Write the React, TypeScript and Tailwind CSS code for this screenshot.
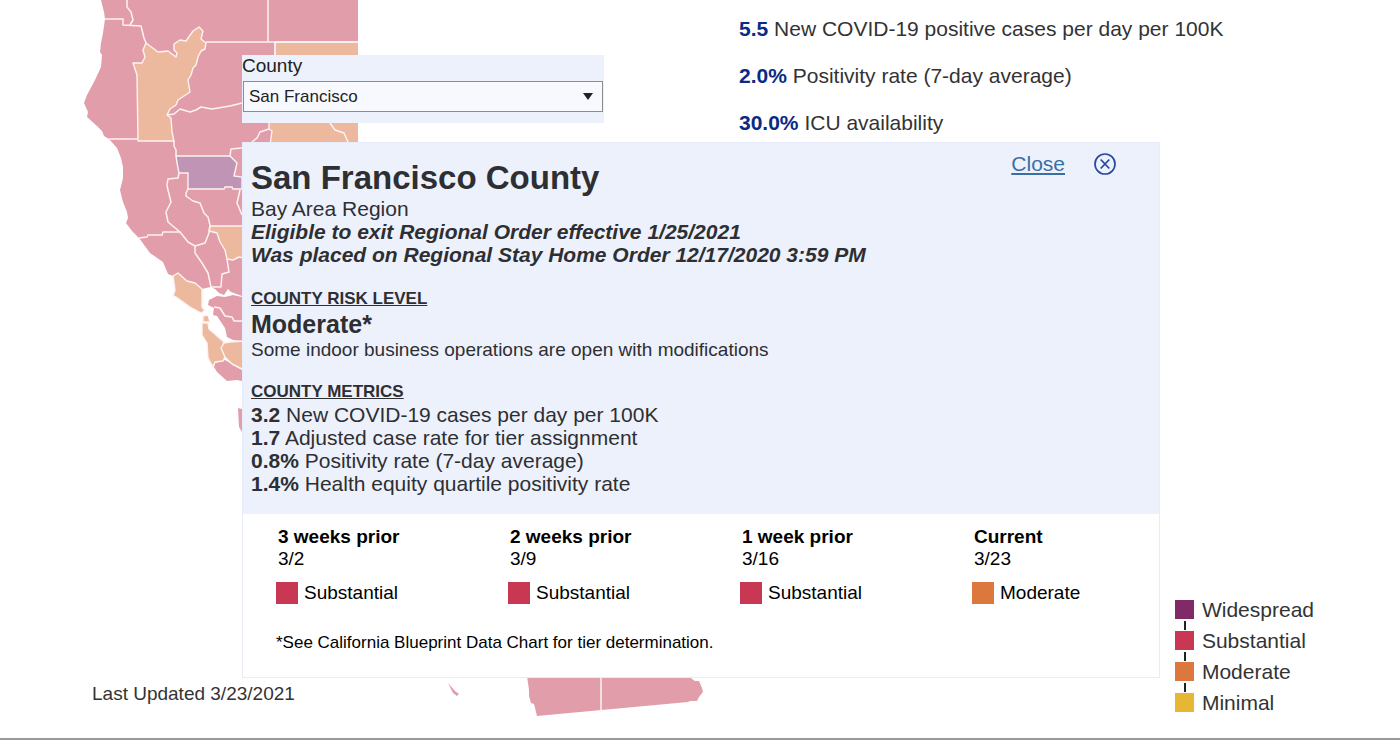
const tiers = [
  { name: "Widespread", color: "bg-[#802b68]" },
  { name: "Substantial", color: "bg-[#c83852]" },
  { name: "Moderate", color: "bg-[#dc783d]" },
  { name: "Minimal", color: "bg-[#e6b735]" },
];

const stateMetrics = [
  { value: "5.5", label: "New COVID-19 positive cases per day per 100K" },
  { value: "2.0%", label: "Positivity rate (7-day average)" },
  { value: "30.0%", label: "ICU availability" },
];

const countyMetrics = [
  { value: "3.2", label: "New COVID-19 cases per day per 100K" },
  { value: "1.7", label: "Adjusted case rate for tier assignment" },
  { value: "0.8%", label: "Positivity rate (7-day average)" },
  { value: "1.4%", label: "Health equity quartile positivity rate" },
];

const history = [
  { title: "3 weeks prior", date: "3/2", tier: "Substantial", color: "bg-[#c83852]" },
  { title: "2 weeks prior", date: "3/9", tier: "Substantial", color: "bg-[#c83852]" },
  { title: "1 week prior", date: "3/16", tier: "Substantial", color: "bg-[#c83852]" },
  { title: "Current", date: "3/23", tier: "Moderate", color: "bg-[#dc783d]" },
];

/* Shapes filled by tier, then the county borders on top */
const substantial = [
  "M101 0L104 12L105 19L103 33L101 43L100 52L102 55L101 67L95 80L87 95L84 103L88 112L87 117L97 126L102 131L104 136L109 139L117 148L121 158L123 167V178L120 190L123 202L127 212L128 218L126 223L132 231L139 238L150 253L163 262L168 274L173 276L178 273L187 281L195 283L202 289L206 288L211 287L215 289L219 293L224 295L228 289L231 292L242 296H358V0Z",
  "M209 300L217 296L225 297L233 295L242 297V341L233 340L227 337L225 328L217 316L213 315L214 308L208 305Z",
  "M215 363L225 360L242 370V381L237 380L227 381L217 372L214 367Z",
  "M238 408L242 409V432L239 427Z",
  "M448 683L455 691L459 694L457 696L453 693Z",
  "M527 676L529 690V696L531 703L534 704L537 716L688 702L690 701L697 701L699 697L703 692L702 688L699 681H695L688 676Z",
];

const moderate = [
  "M146 43L158 52L168 51L176 57L177 53L174 50V44L180 40L186 41L193 31L199 27L203 31L201 39L206 43L205 49L201 51L198 57L196 65L193 68L191 75L188 80L190 92L178 100L176 105L170 109L167 115L171 118L172 132L174 141H138L137 75L133 63L142 63L145 57L143 50Z",
  "M275 42H360V80H275Z",
  "M269 120V129L272 131L270 145H360V120Z",
  "M210 226H244V258L239 257L233 260L227 259L225 250L220 242L217 233L209 231Z",
  "M173 276L178 273L187 281L195 283L202 289V307L205 311L201 313L190 307L176 297L173 296L175 290Z",
  "M203 316L208 315L210 322H203Z",
  "M202 323H208L209 329L224 342L222 348L225 357L223 361L215 362L213 367L208 358L207 343L202 335Z",
  "M224 343L230 342L244 341V370L232 364L225 357L221 348Z",
];

const widespread =
  "M176 156H230L237 163L234 176L242 177V189H233L232 187H225L224 189H188V173H179L177 163Z";

const borders = [
  "M105 19H123V25L141 26L144 38L146 43",
  "M127 0L127 7L131 12L133 20L130 25",
  "M268 0V42M206 42H358M275 42V60",
  "M167 115L174 114L180 109L190 112L196 110L201 107L212 109L230 106L242 103",
  "M109 139H137",
  "M174 141L174 146L176 150V156",
  "M230 156L231 149L242 148",
  "M179 173L178 178L168 179L167 185L168 190L171 202L166 212L168 222L180 232L188 242L195 246V253L202 263L208 273L211 287",
  "M188 189L186 193L186 196L193 201L200 203L204 213L208 217L210 225L209 233L205 243L195 246",
  "M139 238L147 237L148 235H162L163 232H180",
  "M227 259L229 272L222 274L221 287H211",
  "M240 190L237 203L242 215",
  "M269 129L260 132L257 138L252 142",
  "M330 123L335 130L344 133L348 142",
  "M214 307L220 308L225 316L232 317L234 321H242",
  "M601 676V712",
];

function CountyMap() {
  return (
    <svg
      viewBox="0 0 739 738"
      className="col-start-1 row-start-1 h-[738px] w-[739px]"
      role="img"
      aria-label="California counties by risk level"
    >
      <clipPath id="map-frame">
        <path d="M0 0H358V600H739V738H0Z" />
      </clipPath>
      <g clipPath="url(#map-frame)">
        <g fill="#e29dab">
          {substantial.map((d) => (
            <path key={d} d={d} />
          ))}
        </g>
        <g fill="#ecb99e" stroke="#fdf3f2" strokeWidth="1.4" strokeLinejoin="round">
          {moderate.map((d) => (
            <path key={d} d={d} />
          ))}
        </g>
        <path d={widespread} fill="#bf94b4" stroke="#fdf3f2" strokeWidth="1.4" />
        <g fill="none" stroke="#fdf3f2" strokeWidth="1.5" strokeLinejoin="round">
          {borders.map((d) => (
            <path key={d} d={d} />
          ))}
        </g>
      </g>
    </svg>
  );
}

function Legend() {
  return (
    <ul className="mr-[86px] self-end pb-5 text-[21px] text-[#333]">
      {tiers.map((tier, i) => (
        <li key={tier.name} className="relative flex h-[31px] items-center gap-2">
          {i > 0 && <span className="absolute -top-1 left-[9px] h-[9px] w-0.5 bg-[#222]" />}
          <span className={`size-[19px] ${tier.color}`} />
          {tier.name}
        </li>
      ))}
    </ul>
  );
}

function CountyPicker() {
  return (
    <div className="h-[68px] w-[362px] bg-[#edf1fc]">
      <label htmlFor="county" className="block h-[26px] text-[19px] leading-[21px] text-[#222]">
        County
      </label>
      <div className="relative mx-px">
        <select
          id="county"
          className="block h-[31px] w-full appearance-none border border-[#8c8c8c] bg-[#f7f9fe] px-[5px] text-[17px] text-[#222]"
        >
          <option>San Francisco</option>
        </select>
        <svg viewBox="0 0 10 7" className="pointer-events-none absolute top-3 right-[10px] h-[7px] w-[10px]">
          <path d="M0 0H10L5 7Z" fill="#222" />
        </svg>
      </div>
    </div>
  );
}

function CountyPanel() {
  return (
    <section className="border border-[#e8ebfa] bg-white">
      <div className="relative h-[371px] bg-[#edf1fc] px-2 pt-[15px] text-[21px] leading-[23px] text-[#2d2f33]">
        <div className="absolute top-[7px] right-[42px] flex items-center gap-7">
          <a href="#map" className="leading-7 text-[#3a6ea5] underline underline-offset-2">
            Close
          </a>
          <button type="button" aria-label="Close county details">
            <svg viewBox="0 0 24 24" className="size-6" fill="none" stroke="#2848a0">
              <circle cx="12" cy="12" r="10" strokeWidth="1.7" />
              <path d="M7.7 7.5L16.3 16.5M16.3 7.5L7.7 16.5" strokeWidth="1.8" />
            </svg>
          </button>
        </div>
        <h1 className="text-[33px] leading-[39px] font-bold">San Francisco County</h1>
        <p>Bay Area Region</p>
        <p className="font-bold italic">Eligible to exit Regional Order effective 1/25/2021</p>
        <p className="font-bold italic">
          Was placed on Regional Stay Home Order 12/17/2020 3:59 PM
        </p>
        <h2 className="mt-[21px] text-[17px] leading-6 font-bold underline">COUNTY RISK LEVEL</h2>
        <p className="text-[25px] leading-[27px] font-bold">Moderate*</p>
        <p className="text-[19px] leading-6">
          Some indoor business operations are open with modifications
        </p>
        <h2 className="mt-[19px] text-[17px] leading-[22px] font-bold underline">COUNTY METRICS</h2>
        {countyMetrics.map((metric) => (
          <p key={metric.label}>
            <b>{metric.value}</b> {metric.label}
          </p>
        ))}
      </div>
      <div className="h-[163px] pt-3 pl-[33px] text-[19px] leading-[22px] text-black">
        <div className="grid grid-cols-[repeat(4,232px)]">
          {history.map((week) => (
            <div key={week.date}>
              <h3 className="pl-0.5 font-bold">{week.title}</h3>
              <p className="pl-0.5">{week.date}</p>
              <p className="mt-3 flex items-center gap-[6px]">
                <span className={`size-[22px] ${week.color}`} />
                {week.tier}
              </p>
            </div>
          ))}
        </div>
        <p className="mt-7 text-[17px] leading-[22px]">
          *See California Blueprint Data Chart for tier determination.
        </p>
      </div>
    </section>
  );
}

export default function App() {
  return (
    <main
      id="map"
      className="relative border-b-2 border-[#999] bg-white font-['Liberation_Sans',Arial,sans-serif]"
    >
      <div className="flex">
        <div className="grid shrink-0">
          <CountyMap />
          <p className="col-start-1 row-start-1 self-end pb-8 pl-[92px] text-[19px] leading-6 text-[#333]">
            Last Updated 3/23/2021
          </p>
        </div>
        <div className="flex flex-1 flex-col justify-between">
          <div className="space-y-[19px] pt-[15px] text-[21px] leading-7 text-[#333]">
            {stateMetrics.map((metric) => (
              <p key={metric.label}>
                <b className="text-[#0b2a85]">{metric.value}</b> {metric.label}
              </p>
            ))}
          </div>
          <Legend />
        </div>
      </div>
      {/* County details float over the map */}
      <div className="absolute top-[55px] right-60 left-[242px] space-y-[19px]">
        <CountyPicker />
        <CountyPanel />
      </div>
    </main>
  );
}
